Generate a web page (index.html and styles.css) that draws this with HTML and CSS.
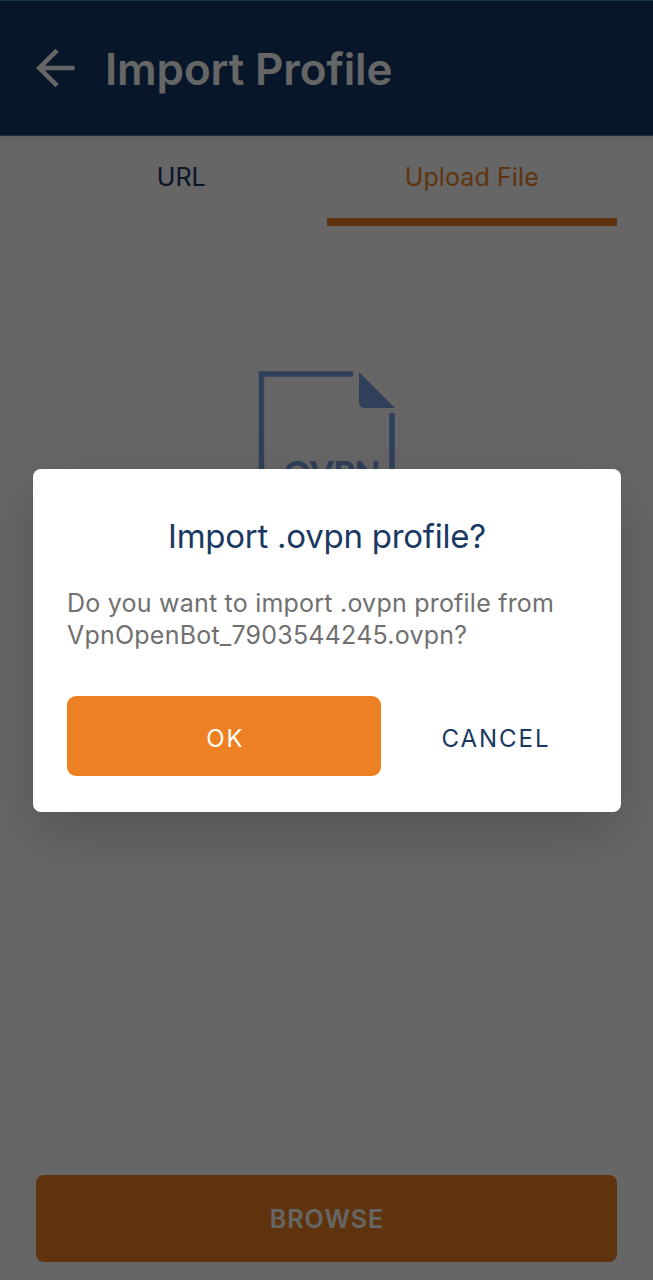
FILE: index.html
```
<!DOCTYPE html>
<html lang="en">
<head>
<meta charset="utf-8">
<title>Import Profile</title>
<link rel="stylesheet" href="styles.css">
</head>
<body>
<div class="screen">
  <header class="app-bar">
    <svg class="back" width="40" height="40" viewBox="0 0 40 40" aria-hidden="true">
      <path d="M38.5 20H4M21 2.3L3.3 20L21 37.7" fill="none" stroke="#fff" stroke-width="4.6"/>
    </svg>
    <h1 class="app-title">Import Profile</h1>
  </header>
  <nav class="tabs">
    <div class="tab"><span>URL</span></div>
    <div class="tab tab-active"><span>Upload File</span></div>
  </nav>
  <main class="drop">
    <svg width="138" height="170" viewBox="0 0 138 170" aria-hidden="true">
      <path d="M95 3H3.5V167H134V42" fill="none" stroke="#799fe2" stroke-width="5.5"/>
      <path d="M101 1L137 37H107Q101 37 101 31Z" fill="#799fe2"/>
      <text class="file-type" x="25.500" y="114.500" textLength="97" lengthAdjust="spacingAndGlyphs">OVPN</text>
    </svg>
  </main>
  <footer class="actions"><button class="browse">BROWSE</button></footer>
</div>
<div class="overlay">
  <section class="dialog" role="dialog">
    <h2 class="dialog-title">Import .ovpn profile?</h2>
    <p class="dialog-text">Do you want to import .ovpn profile from<br>VpnOpenBot_7903544245.ovpn?</p>
    <div class="dialog-actions">
      <button class="btn btn-ok">OK</button>
      <button class="btn btn-cancel">CANCEL</button>
    </div>
  </section>
</div>
</body>
</html>
```
FILE: styles.css
```
* { box-sizing: border-box; margin: 0; padding: 0; }
body { font-family: Inter, "Liberation Sans", sans-serif; background: #fff; }
button { border: 0; font-family: inherit; }
.screen { display: flex; flex-direction: column; height: 1280px; overflow: hidden; }
.app-bar {
  display: flex; align-items: center; gap: 30px; height: 136px;
  padding: 0 36px; background: #15376a; border-top: 1px solid #3a7bb0;
  border-bottom: 1px solid #50699a; box-shadow: 0 2px 8px rgba(0, 0, 0, .12);
}
.back { flex: none; }
.app-title { padding-top: 2px; font-size: 44px; font-weight: 600; line-height: 56px; color: #fff; white-space: nowrap; letter-spacing: -.12px; margin-left: -1px; }
.tabs { display: flex; padding: 0 36px; }
.tab {
  flex: 1; height: 90px; padding-top: 25px; text-align: center;
  font-size: 25px; line-height: 33px; letter-spacing: .1px; color: #143568; border-bottom: 8px solid transparent;
}
.tab-active { color: #ed8022; border-bottom-color: #ed8022; }
.drop { flex: 1; display: flex; justify-content: center; padding-top: 145px; }
.file-type { font-family: Lato, sans-serif; font-size: 34px; font-weight: 900; fill: #799fe2; }
.actions { padding: 0 36px 18px; }
.browse {
  display: block; width: 100%; height: 87px; border-radius: 8px; background: #ed8022;
  color: #fff; font-size: 25px; font-weight: 600; letter-spacing: 1px; padding-left: 1px;
}
.overlay {
  position: absolute; inset: 0; height: 1280px; overflow: hidden;
  padding: 469px 32px 0 33px; background: rgba(0, 0, 0, .6);
}
.dialog {
  height: 343px; padding: 47px 34px 36px; border-radius: 8px; background: #fff;
  box-shadow: 0 22px 60px rgba(0, 0, 0, .17);
}
.dialog-title { text-align: center; font-size: 33px; font-weight: 400; line-height: 40px; letter-spacing: -.25px; color: #193962; white-space: nowrap; }
.dialog-text { margin-top: 31px; font-size: 25px; line-height: 32px; letter-spacing: .22px; color: #707070; white-space: nowrap; }
.dialog-actions { display: flex; margin: 45px -24px 0 0; }
.btn { flex: none; height: 80px; padding-top: 4px; border-radius: 9px; font-size: 24px; letter-spacing: 2px; }
.btn-ok { width: 314px; padding-left: 3px; background: #ed8022; color: #fff; }
.btn-cancel { width: 230px; background: transparent; color: #193962; }
```
